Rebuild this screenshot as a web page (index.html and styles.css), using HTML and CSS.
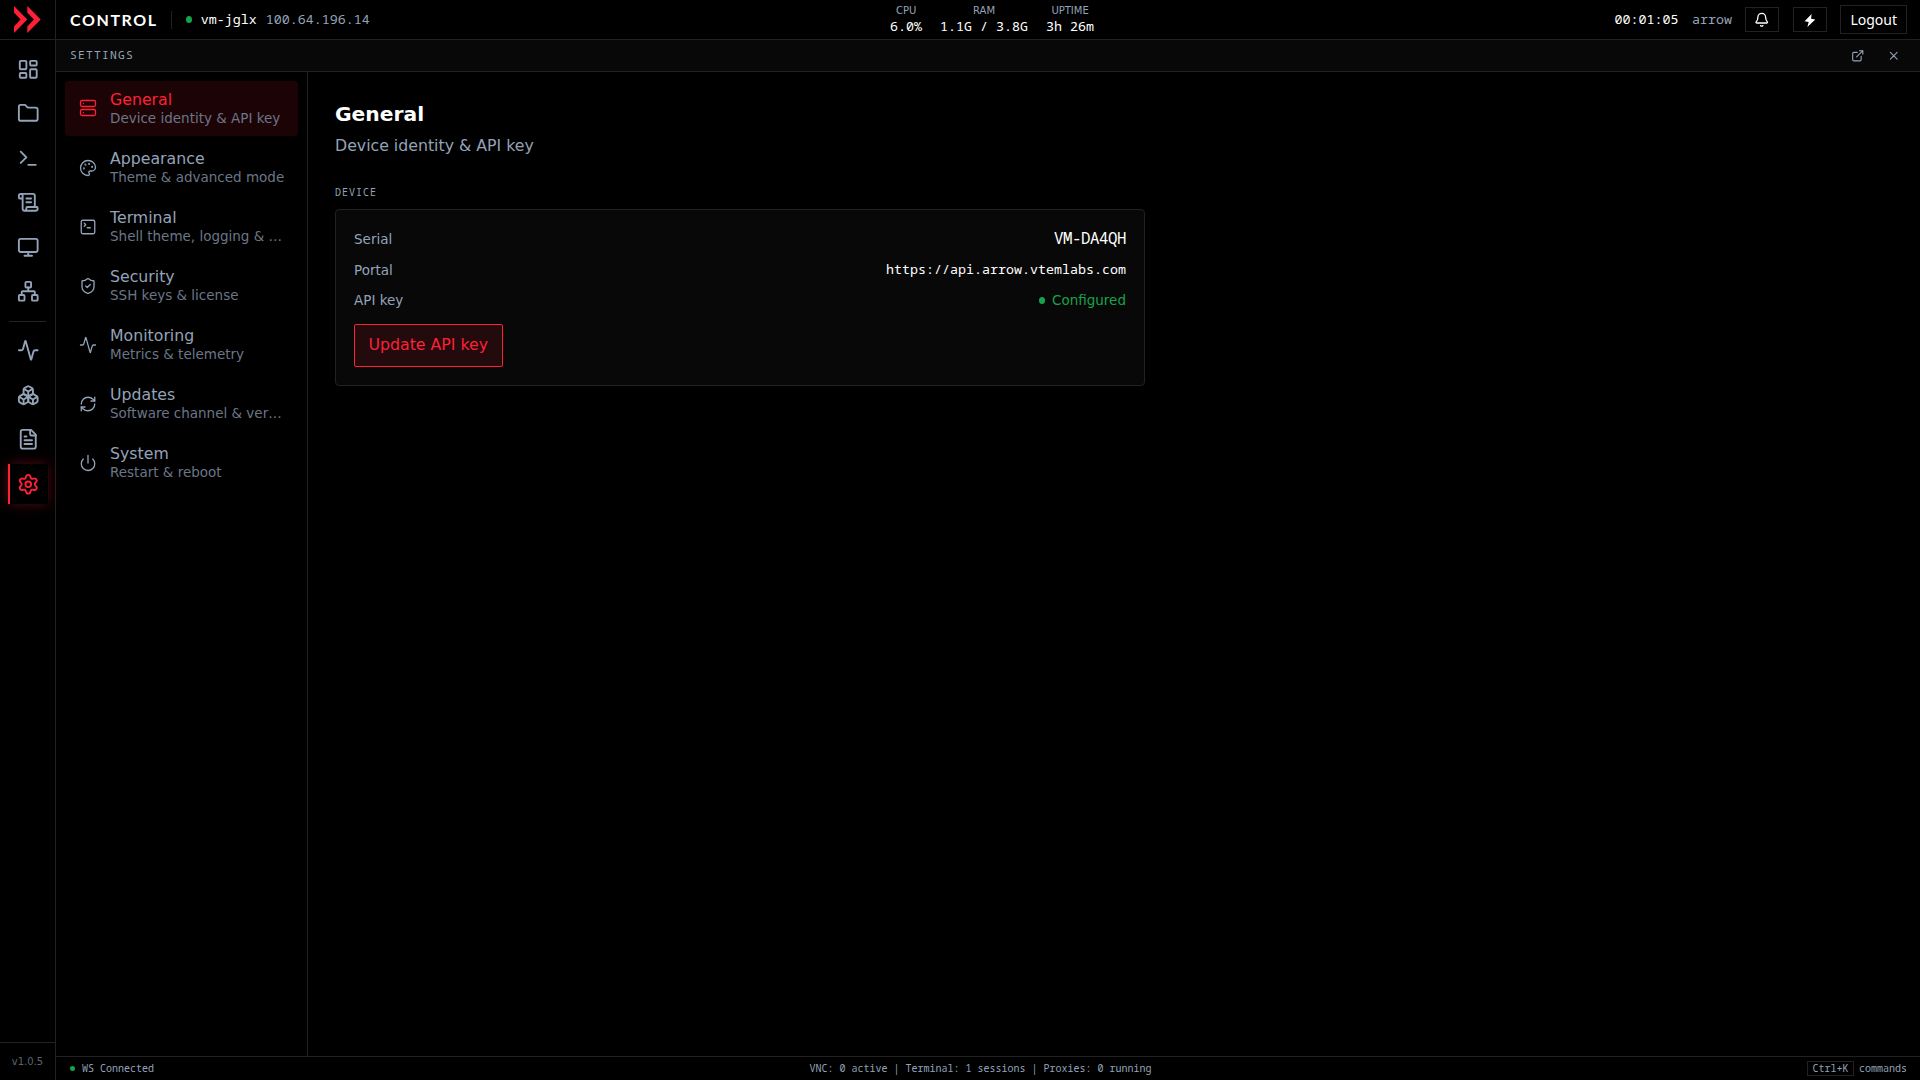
FILE: index.html
```html
<!DOCTYPE html>
<html lang="en">
<head>
    <meta charset="UTF-8">
    <meta name="viewport" content="width=device-width, initial-scale=1.0">
    <title>Control - Settings</title>
    <link rel="stylesheet" href="styles.css">
</head>
<body>

    <aside class="sidebar">
        <div class="logo">
            <svg width="27" height="27" viewBox="0 0 27 27"><path d="M0 0 13.3 13.5 0 27v-6.5l6.5-7L0 6.5zM13.3 0l13.4 13.5L13.3 27v-6.5l6.6-7-6.6-7z" fill="#ff2036"/></svg>
        </div>
        <nav class="rail">
            <a class="rail-item"><svg class="icon" viewBox="0 0 24 24"><rect width="7" height="9" x="3" y="3" rx="1"/><rect width="7" height="5" x="14" y="3" rx="1"/><rect width="7" height="9" x="14" y="12" rx="1"/><rect width="7" height="5" x="3" y="16" rx="1"/></svg></a>
            <a class="rail-item"><svg class="icon" viewBox="0 0 24 24"><path d="M20 20a2 2 0 0 0 2-2V8a2 2 0 0 0-2-2h-7.9a2 2 0 0 1-1.69-.9L9.6 3.9A2 2 0 0 0 7.93 3H4a2 2 0 0 0-2 2v13a2 2 0 0 0 2 2Z"/></svg></a>
            <a class="rail-item"><svg class="icon" viewBox="0 0 24 24"><path d="m4 17 6-6-6-6M12 19h8"/></svg></a>
            <a class="rail-item"><svg class="icon" viewBox="0 0 24 24"><path d="M15 12h-5M15 8h-5M19 17V5a2 2 0 0 0-2-2H4"/><path d="M8 21h12a2 2 0 0 0 2-2v-1a1 1 0 0 0-1-1H11a1 1 0 0 0-1 1v1a2 2 0 1 1-4 0V5a2 2 0 1 0-4 0v2a1 1 0 0 0 1 1h3"/></svg></a>
            <a class="rail-item"><svg class="icon" viewBox="0 0 24 24"><rect width="20" height="14" x="2" y="3" rx="2"/><path d="M8 21h8M12 17v4"/></svg></a>
            <a class="rail-item"><svg class="icon" viewBox="0 0 24 24"><rect x="16" y="16" width="6" height="6" rx="1"/><rect x="2" y="16" width="6" height="6" rx="1"/><rect x="9" y="2" width="6" height="6" rx="1"/><path d="M5 16v-3a1 1 0 0 1 1-1h12a1 1 0 0 1 1 1v3M12 12V8"/></svg></a>
            <div class="rail-divider"></div>
            <a class="rail-item"><svg class="icon" viewBox="0 0 24 24"><path d="M22 12h-2.48a2 2 0 0 0-1.93 1.46l-2.35 8.36a.25.25 0 0 1-.48 0L9.24 2.18a.25.25 0 0 0-.48 0l-2.35 8.36A2 2 0 0 1 4.49 12H2"/></svg></a>
            <a class="rail-item"><svg class="icon" viewBox="0 0 24 24"><path d="M2.97 12.92A2 2 0 0 0 2 14.63v3.24a2 2 0 0 0 .97 1.71l3 1.8a2 2 0 0 0 2.06 0L12 19v-5.5l-5-3-4.03 2.42ZM7 16.5l-4.74-2.85M7 16.5l5-3M7 16.5v5.17"/><path d="M12 13.5V19l3.97 2.38a2 2 0 0 0 2.06 0l3-1.8a2 2 0 0 0 .97-1.71v-3.24a2 2 0 0 0-.97-1.71L17 10.5l-5 3ZM17 16.5l-5-3M17 16.5l4.74-2.85M17 16.5v5.17"/><path d="M7.97 4.42A2 2 0 0 0 7 6.13v4.37l5 3 5-3V6.13a2 2 0 0 0-.97-1.71l-3-1.8a2 2 0 0 0-2.06 0l-3 1.8ZM12 8 7.26 5.15M12 8l4.74-2.85M12 13.5V8"/></svg></a>
            <a class="rail-item"><svg class="icon" viewBox="0 0 24 24"><path d="M15 2H6a2 2 0 0 0-2 2v16a2 2 0 0 0 2 2h12a2 2 0 0 0 2-2V7Z"/><path d="M14 2v4a2 2 0 0 0 2 2h4M10 9H8M16 13H8M16 17H8"/></svg></a>
            <a class="rail-item active"><svg class="icon" viewBox="0 0 24 24"><path d="M9.671 4.136a2.34 2.34 0 0 1 4.659 0 2.34 2.34 0 0 0 3.319 1.915 2.34 2.34 0 0 1 2.33 4.033 2.34 2.34 0 0 0 0 3.831 2.34 2.34 0 0 1-2.33 4.033 2.34 2.34 0 0 0-3.319 1.915 2.34 2.34 0 0 1-4.659 0 2.34 2.34 0 0 0-3.32-1.915 2.34 2.34 0 0 1-2.33-4.033 2.34 2.34 0 0 0 0-3.831A2.34 2.34 0 0 1 6.35 6.051a2.34 2.34 0 0 0 3.319-1.915"/><circle cx="12" cy="12" r="3"/></svg></a>
        </nav>
        <div class="version">v1.0.5</div>
    </aside>

    <div class="shell">
        <header class="topbar">
            <div class="brand">
                <span class="brand-name">CONTROL</span>
                <span class="brand-sep"></span>
                <span class="dot"></span>
                <span class="host">vm-jglx</span>
                <span class="ip">100.64.196.14</span>
            </div>
            <div class="stats">
                <div class="stat"><span class="stat-label">CPU</span><span class="stat-value">6.0%</span></div>
                <div class="stat"><span class="stat-label">RAM</span><span class="stat-value">1.1G / 3.8G</span></div>
                <div class="stat"><span class="stat-label">UPTIME</span><span class="stat-value">3h 26m</span></div>
            </div>
            <div class="actions">
                <span class="clock">00:01:05</span>
                <span class="user">arrow</span>
                <button class="icon-btn"><svg class="icon" viewBox="0 0 24 24"><path d="M10.268 21a2 2 0 0 0 3.464 0M3.262 15.326A1 1 0 0 0 4 17h16a1 1 0 0 0 .74-1.673C19.41 13.956 18 12.499 18 8A6 6 0 0 0 6 8c0 4.499-1.411 5.956-2.738 7.326"/></svg></button>
                <button class="icon-btn"><svg class="bolt" viewBox="0 0 12 13"><path d="M7.6 0 .6 7.3l4.1.6L3.4 13l7.9-7.6-4.2-.6z"/></svg></button>
                <button class="logout">Logout</button>
            </div>
        </header>

        <div class="panel-bar">
            <span class="panel-title">SETTINGS</span>
            <div class="panel-tools">
                <svg class="icon popout" viewBox="0 0 24 24"><path d="M15 3h6v6M10 14 21 3M18 13v6a2 2 0 0 1-2 2H5a2 2 0 0 1-2-2V8a2 2 0 0 1 2-2h6"/></svg>
                <svg class="icon close" viewBox="0 0 24 24"><path d="M18 6 6 18M6 6l12 12"/></svg>
            </div>
        </div>

        <div class="workspace">
            <nav class="settings-nav">
                <a class="nav-item active">
                    <svg class="icon" viewBox="0 0 24 24"><rect width="20" height="8" x="2" y="2" rx="2"/><rect width="20" height="8" x="2" y="14" rx="2"/><path d="M6 6h.01M6 18h.01"/></svg>
                    <div class="nav-text"><span class="nav-title">General</span><span class="nav-desc">Device identity &amp; API key</span></div>
                </a>
                <a class="nav-item">
                    <svg class="icon" viewBox="0 0 24 24"><path d="M12 22a1 1 0 0 1 0-20 10 9 0 0 1 10 9 5 5 0 0 1-5 5h-2.25a1.75 1.75 0 0 0-1.4 2.8l.3.4a1.75 1.75 0 0 1-1.4 2.8z"/><circle cx="13.5" cy="6.5" r=".5"/><circle cx="17.5" cy="10.5" r=".5"/><circle cx="6.5" cy="12.5" r=".5"/><circle cx="8.5" cy="7.5" r=".5"/></svg>
                    <div class="nav-text"><span class="nav-title">Appearance</span><span class="nav-desc">Theme &amp; advanced mode</span></div>
                </a>
                <a class="nav-item">
                    <svg class="icon" viewBox="0 0 24 24"><path d="m7 11 2-2-2-2M11 13h4"/><rect width="18" height="18" x="3" y="3" rx="2"/></svg>
                    <div class="nav-text"><span class="nav-title">Terminal</span><span class="nav-desc">Shell theme, logging &amp; …</span></div>
                </a>
                <a class="nav-item">
                    <svg class="icon" viewBox="0 0 24 24"><path d="M20 13c0 5-3.5 7.5-7.66 8.95a1 1 0 0 1-.67-.01C7.5 20.5 4 18 4 13V6a1 1 0 0 1 1-1c2 0 4.5-1.2 6.24-2.72a1.17 1.17 0 0 1 1.52 0C14.51 3.81 17 5 19 5a1 1 0 0 1 1 1z"/><path d="m9 12 2 2 4-4"/></svg>
                    <div class="nav-text"><span class="nav-title">Security</span><span class="nav-desc">SSH keys &amp; license</span></div>
                </a>
                <a class="nav-item">
                    <svg class="icon" viewBox="0 0 24 24"><path d="M22 12h-2.48a2 2 0 0 0-1.93 1.46l-2.35 8.36a.25.25 0 0 1-.48 0L9.24 2.18a.25.25 0 0 0-.48 0l-2.35 8.36A2 2 0 0 1 4.49 12H2"/></svg>
                    <div class="nav-text"><span class="nav-title">Monitoring</span><span class="nav-desc">Metrics &amp; telemetry</span></div>
                </a>
                <a class="nav-item">
                    <svg class="icon" viewBox="0 0 24 24"><path d="M3 12a9 9 0 0 1 9-9 9.75 9.75 0 0 1 6.74 2.74L21 8"/><path d="M21 3v5h-5M21 12a9 9 0 0 1-9 9 9.75 9.75 0 0 1-6.74-2.74L3 16"/><path d="M8 16H3v5"/></svg>
                    <div class="nav-text"><span class="nav-title">Updates</span><span class="nav-desc">Software channel &amp; ver…</span></div>
                </a>
                <a class="nav-item">
                    <svg class="icon" viewBox="0 0 24 24"><path d="M12 2v10M18.4 6.6a9 9 0 1 1-12.77.04"/></svg>
                    <div class="nav-text"><span class="nav-title">System</span><span class="nav-desc">Restart &amp; reboot</span></div>
                </a>
            </nav>

            <main class="content">
                <h1>General</h1>
                <p class="subtitle">Device identity &amp; API key</p>
                <h2>DEVICE</h2>
                <section class="card">
                    <div class="row"><span>Serial</span><span class="serial">VM-DA4QH</span></div>
                    <div class="row"><span>Portal</span><span class="portal">https://api.arrow.vtemlabs.com</span></div>
                    <div class="row"><span>API key</span><span class="configured"><i class="dot"></i>Configured</span></div>
                    <button class="update-btn">Update API key</button>
                </section>
            </main>
        </div>

        <footer class="statusbar">
            <span class="ws"><i class="dot"></i>WS Connected</span>
            <span>VNC: 0 active | Terminal: 1 sessions | Proxies: 0 running</span>
            <span class="hint"><kbd>Ctrl+K</kbd>commands</span>
        </footer>
    </div>

</body>
</html>
```
FILE: styles.css
```css
* {
    box-sizing: border-box;
}

body {
    margin: 0;
    display: flex;
    height: 100vh;
    overflow: hidden;
    background: #000;
    color: #94a3b8;
    font-family: "DejaVu Sans", sans-serif;
    font-size: 15.75px;
}

button {
    font-family: inherit;
    cursor: pointer;
}

.icon {
    fill: none;
    stroke: currentColor;
    stroke-width: 1.75;
    stroke-linecap: round;
    stroke-linejoin: round;
    flex: none;
}

.dot {
    flex: none;
    width: 6px;
    height: 7px;
    border-radius: 50%;
    background: #16a34a;
}

/* Left icon rail */
.sidebar {
    width: 56px;
    flex: none;
    display: flex;
    flex-direction: column;
    border-right: 1px solid #222;
}

.logo {
    height: 40px;
    padding: 6px 0 0 14px;
    border-bottom: 1px solid #222;
}

.logo svg {
    display: block;
}

.rail {
    flex: 1;
    display: flex;
    flex-direction: column;
    align-items: center;
    gap: 4.5px;
    padding-top: 9px;
}

.rail-item {
    width: 40px;
    height: 40px;
    display: flex;
    align-items: center;
    justify-content: center;
    border-left: 2px solid transparent;
}

.rail-item .icon {
    width: 22.5px;
    height: 22.5px;
    stroke-width: 2;
}

.rail-item.active {
    color: #ff2036;
    background: #000;
    border-left-color: #ff2036;
    box-shadow: 0 0 12px rgba(255, 32, 54, 0.3);
}

.rail-divider {
    width: 37px;
    height: 1px;
    margin: 4.5px 0;
    background: #222;
}

.version {
    height: 38px;
    line-height: 38px;
    border-top: 1px solid #222;
    font-size: 10px;
    color: #5b6472;
    text-align: center;
}

/* Top bar */
.shell {
    flex: 1;
    min-width: 0;
    display: flex;
    flex-direction: column;
}

.topbar {
    height: 40px;
    flex: none;
    display: flex;
    align-items: center;
    justify-content: space-between;
    padding: 0 13px 0 14px;
    border-bottom: 1px solid #222;
    font-family: "Noto Sans Mono", "DejaVu Sans Mono", monospace;
    font-size: 13.33px;
}

.brand, .actions {
    display: flex;
    align-items: center;
}

.brand-name {
    padding-bottom: 1px;
    font-family: Lato, sans-serif;
    font-size: 16px;
    font-weight: 700;
    letter-spacing: 1.6px;
    color: #fff;
}

.brand-sep {
    width: 1px;
    height: 18px;
    margin: 0 14px 0 13px;
    background: #222;
}

.host {
    margin: 0 9px;
    color: #fff;
}

.host, .ip, .clock, .user {
    padding-bottom: 2px;
}

.stats {
    display: flex;
    gap: 18px;
    padding-bottom: 1px;
}

.stat {
    display: flex;
    flex-direction: column;
    align-items: center;
}

.stat-label {
    font-family: "DejaVu Sans", sans-serif;
    font-size: 10px;
    line-height: 16px;
}

.stat-value {
    padding-bottom: 2px;
    line-height: 14px;
}

.stat-value, .clock {
    color: #fff;
}

.actions {
    gap: 13.5px;
}

.icon-btn {
    width: 34px;
    height: 25px;
    padding: 0;
    display: flex;
    align-items: center;
    justify-content: center;
    background: #000;
    border: 1px solid #222;
    color: #fff;
}

.icon-btn .icon {
    width: 15.5px;
    height: 15.5px;
    margin-right: 1px;
    stroke-width: 2;
}

.bolt {
    width: 12px;
    height: 13px;
    margin: 2px 0 0 1px;
    fill: #fff;
}

.logout {
    height: 29px;
    padding: 0 9px;
    background: #000;
    border: 1px solid #222;
    color: #fff;
    font-family: "Noto Sans", sans-serif;
    font-size: 14px;
}

/* Panel title bar */
.panel-bar {
    height: 32px;
    flex: none;
    display: flex;
    align-items: center;
    justify-content: space-between;
    padding: 0 20px 0 14px;
    background: #080808;
    border-bottom: 1px solid #222;
}

.panel-title {
    padding-bottom: 2px;
    font-family: "Noto Sans Mono", "DejaVu Sans Mono", monospace;
    font-size: 11.25px;
    letter-spacing: 1.25px;
}

.panel-tools {
    display: flex;
    align-items: center;
    gap: 22.5px;
}

.panel-tools .icon {
    width: 13.5px;
    height: 13.5px;
    stroke-width: 2;
}

/* Settings navigation */
.workspace {
    flex: 1;
    min-height: 0;
    display: flex;
}

.settings-nav {
    width: 252px;
    flex: none;
    display: flex;
    flex-direction: column;
    gap: 4px;
    padding: 9px;
    border-right: 1px solid #222;
}

.nav-item {
    height: 55px;
    display: flex;
    align-items: center;
    gap: 13px;
    padding: 0 9px 0 14px;
    border-radius: 3px;
}

.nav-item .icon {
    width: 18px;
    height: 18px;
}

.nav-item.active .icon {
    margin-bottom: 1px;
}

.nav-text {
    flex: 1;
    min-width: 0;
    display: flex;
    flex-direction: column;
}

.nav-title {
    line-height: 20px;
}

.nav-desc {
    line-height: 17px;
    font-size: 13.5px;
    color: #6b7687;
    white-space: nowrap;
    overflow: hidden;
    text-overflow: ellipsis;
}

.nav-item.active {
    background: #1c0306;
    color: #ff2036;
}

/* Content */
.content {
    width: 864px;
    padding: 27px;
}

h1 {
    margin: 0;
    font-size: 20.25px;
    line-height: 30px;
    color: #fff;
}

.subtitle {
    margin: 5px 0 0;
    line-height: 24px;
}

h2 {
    margin: 27px 0 9px;
    font-family: "Noto Sans Mono", "DejaVu Sans Mono", monospace;
    font-size: 10px;
    font-weight: 400;
    line-height: 15px;
    letter-spacing: 1px;
}

.card {
    height: 177px;
    padding: 17px 18px;
    background: #080808;
    border: 1px solid #222;
    border-radius: 4px;
}

.row {
    height: 30.5px;
    padding-bottom: 6px;
    display: flex;
    align-items: center;
    justify-content: space-between;
    font-size: 13.5px;
}

.serial, .portal {
    padding-bottom: 2px;
    font-family: "Noto Sans Mono", "DejaVu Sans Mono", monospace;
    color: #fff;
}

.serial {
    font-size: 15.75px;
    letter-spacing: -0.45px;
}

.portal {
    font-size: 13.33px;
}

.configured {
    display: flex;
    align-items: center;
    gap: 7px;
    color: #16a34a;
}

.update-btn {
    height: 43px;
    margin-top: 5px;
    padding: 0 13.5px 2px;
    background: #220a0d;
    border: 1px solid #ff2036;
    border-radius: 2px;
    color: #ff2036;
    font-size: 15.75px;
}

/* Status bar */
.statusbar {
    height: 24px;
    flex: none;
    display: flex;
    align-items: center;
    justify-content: space-between;
    padding: 0 13px 1px 14px;
    border-top: 1px solid #222;
    font-family: "Noto Sans Mono", "DejaVu Sans Mono", monospace;
    font-size: 10px;
}

.ws, .hint {
    display: flex;
    align-items: center;
    gap: 7px;
}

.hint {
    gap: 5px;
}

.ws .dot {
    width: 5px;
    height: 5px;
    margin-top: 1px;
}

kbd {
    padding: 0 4.5px;
    border: 1px solid #222;
    font-family: inherit;
    font-size: 10px;
    line-height: 13px;
}
```
